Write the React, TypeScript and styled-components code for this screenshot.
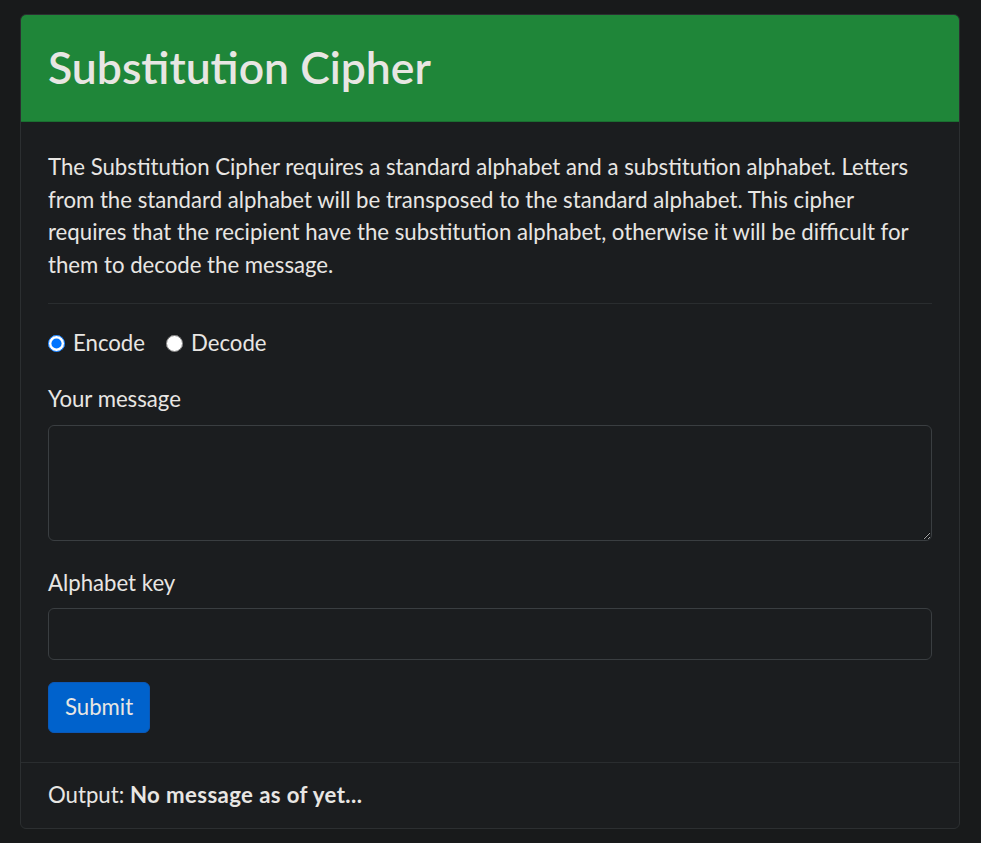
import React, { useState } from "react";
import styled, { createGlobalStyle } from "styled-components";

const GlobalStyle = createGlobalStyle`
  html, body { margin: 0; padding: 0; }
  body {
    background: #181a1b;
    color: #e8e6e3;
    font-family: Lato, "Open Sans", "Liberation Sans", sans-serif;
    font-size: 22.2px;
    line-height: 32.6px;
  }
  * { box-sizing: border-box; }
`;

const Page = styled.div`
  padding: 14px 21px 14px 20px;
`;

const Card = styled.div`
  background: #1b1d1f;
  border: 1px solid #2c2f31;
  border-radius: 6px;
  overflow: hidden;
`;

const Header = styled.div`
  background: #1f8639;
  border-bottom: 1px solid #1a6f30;
  padding: 23px 27px 25px;
`;

const Title = styled.h1`
  margin: 0;
  font-size: 44.5px;
  line-height: 58px;
  font-weight: 600;
  color: #e8e6e3;
`;

const Body = styled.div`
  padding: 29px 27px 29px;
`;

const Intro = styled.p`
  margin: 0;
`;

const Divider = styled.hr`
  margin: 22px 0 23px;
  border: 0;
  border-top: 1px solid #2a2d2f;
`;

const RadioRow = styled.div`
  display: flex;
  align-items: center;
  gap: 21px;
  margin-bottom: 23px;
`;

const RadioLabel = styled.label`
  display: flex;
  align-items: center;
  gap: 8px;
  cursor: pointer;
`;

const Radio = styled.input`
  width: 17px;
  height: 17px;
  margin: 0;
`;

const Field = styled.div<{ $gap: number }>`
  margin-bottom: ${(p) => p.$gap}px;
`;

const Label = styled.label`
  display: block;
  margin-bottom: 9px;
`;

const TextArea = styled.textarea`
  display: block;
  width: 100%;
  height: 116px;
  padding: 8px 16px;
  background: #1b1d1f;
  color: #e8e6e3;
  border: 1px solid #3a3e41;
  border-radius: 6px;
  font: inherit;
  outline: none;
`;

const Input = styled.input`
  display: block;
  width: 100%;
  height: 52px;
  padding: 8px 16px;
  background: #1b1d1f;
  color: #e8e6e3;
  border: 1px solid #3a3e41;
  border-radius: 6px;
  font: inherit;
  outline: none;
`;

const SubmitButton = styled.button`
  display: block;
  height: 51px;
  padding: 0 16px;
  background: #0062cc;
  color: #e8e6e3;
  border: 1px solid #0a58b8;
  border-radius: 6px;
  font: inherit;
  cursor: pointer;
`;

const Footer = styled.div`
  border-top: 1px solid #2a2d2f;
  padding: 16px 27px;
`;

const Strong = styled.strong`
  font-weight: 700;
  letter-spacing: 0.4px;
`;

export default function App() {
  const [mode, setMode] = useState("encode");
  return (
    <>
      <GlobalStyle />
      <Page>
        <Card>
          <Header>
            <Title>Substitution Cipher</Title>
          </Header>
          <Body>
            <Intro>
              The Substitution Cipher requires a standard alphabet and a substitution alphabet. Letters from the
              standard alphabet will be transposed to the standard alphabet. This cipher requires that the recipient
              have the substitution alphabet, otherwise it will be difficult for them to decode the message.
            </Intro>
            <Divider />
            <RadioRow>
              <RadioLabel>
                <Radio
                  type="radio"
                  name="mode"
                  checked={mode === "encode"}
                  onChange={() => setMode("encode")}
                />
                Encode
              </RadioLabel>
              <RadioLabel>
                <Radio
                  type="radio"
                  name="mode"
                  checked={mode === "decode"}
                  onChange={() => setMode("decode")}
                />
                Decode
              </RadioLabel>
            </RadioRow>
            <Field $gap={26}>
              <Label htmlFor="msg">Your message</Label>
              <TextArea id="msg" />
            </Field>
            <Field $gap={22}>
              <Label htmlFor="key">Alphabet key</Label>
              <Input id="key" type="text" />
            </Field>
            <SubmitButton type="button">Submit</SubmitButton>
          </Body>
          <Footer>
            Output: <Strong>No message as of yet...</Strong>
          </Footer>
        </Card>
      </Page>
    </>
  );
}
